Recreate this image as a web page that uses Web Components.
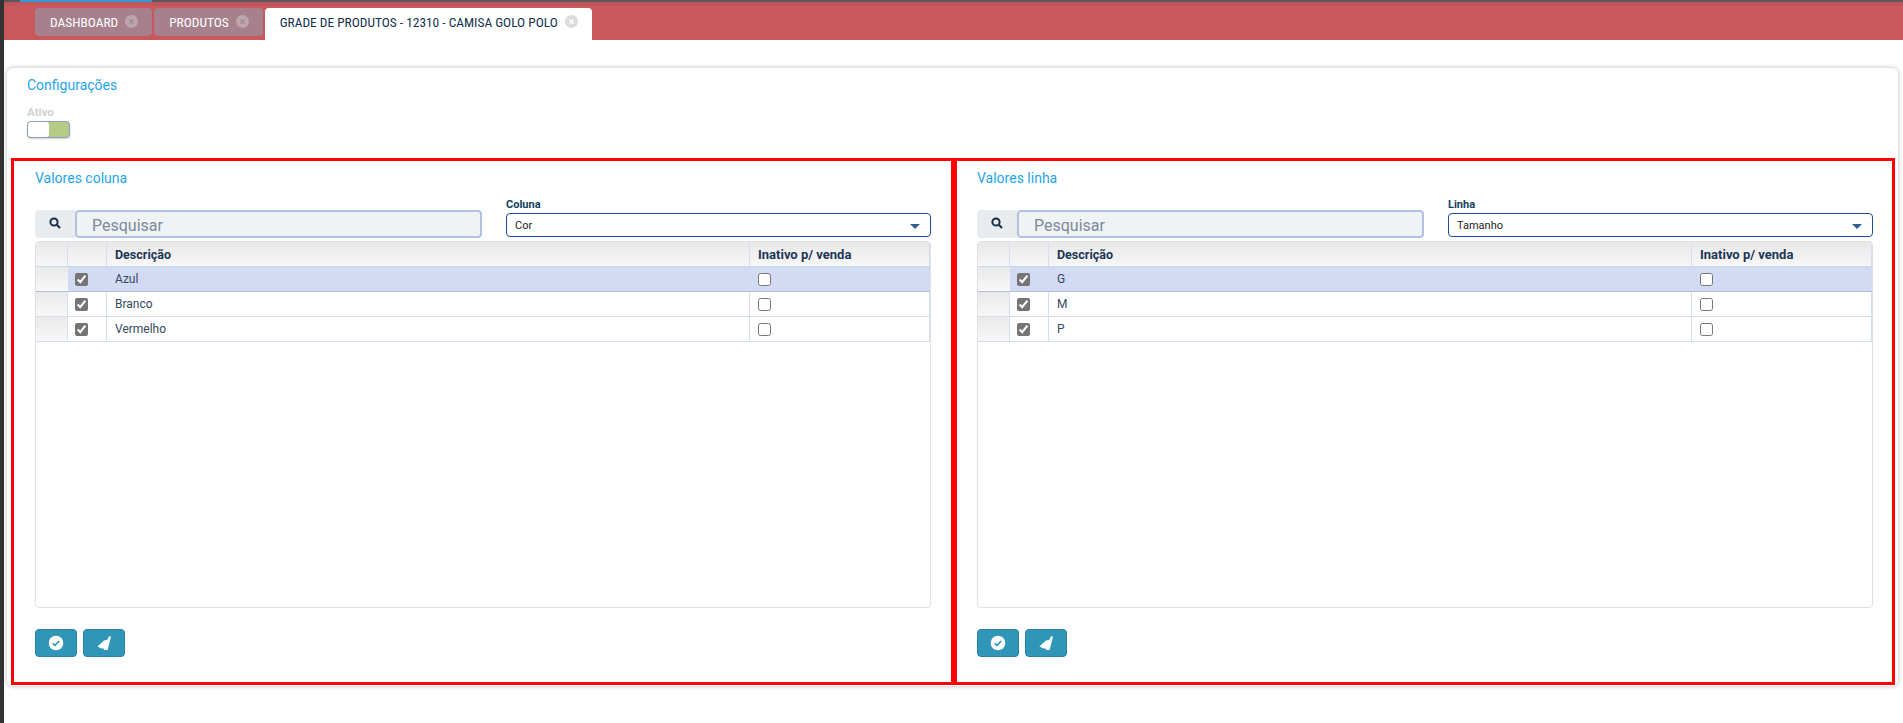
<!DOCTYPE html>
<html lang="pt">
<head>
<meta charset="utf-8">
<title>Grade de produtos</title>
<style>
  html, body { margin: 0; padding: 0; background: #fff; height: 100%; }
  body { font-family: Roboto, 'Liberation Sans', sans-serif; overflow: hidden; }
</style>
</head>
<body>

<app-shell>
  <tab-bar>
    <tab-item>DASHBOARD</tab-item>
    <tab-item>PRODUTOS</tab-item>
    <tab-item active>GRADE DE PRODUTOS - 12310 - CAMISA GOLO POLO</tab-item>
  </tab-bar>
  <page-card>
    <config-section slot="top"></config-section>
    <value-panel heading="Valores coluna" label="Coluna" value="Cor" rows="Azul,Branco,Vermelho"></value-panel>
    <value-panel heading="Valores linha" label="Linha" value="Tamanho" rows="G,M,P"></value-panel>
  </page-card>
</app-shell>

<script>
const condensed = `'Liberation Sans Narrow', 'Roboto Condensed', Roboto, sans-serif`

class AppShell extends HTMLElement {
  connectedCallback() {
    this.attachShadow({ mode: 'open' }).innerHTML = `
      <style>
        :host {
          display: block;
          height: 723px;
          box-sizing: border-box;
          border-left: 4px solid #333;
          background: #fff;
        }
      </style>
      <slot></slot>
    `
  }
}

class TabBar extends HTMLElement {
  connectedCallback() {
    this.attachShadow({ mode: 'open' }).innerHTML = `
      <style>
        :host { display: block; }
        .top {
          height: 2px;
          background: #5a5a5a;
          padding-left: 16px;
        }
        .top div {
          width: 132px;
          height: 2px;
          background: #3a97d4;
        }
        .bar {
          height: 38px;
          box-sizing: border-box;
          padding: 6px 0 0 31px;
          background: linear-gradient(#b9545a 0, #c9575b 4px);
          display: flex;
          align-items: flex-start;
          gap: 2px;
        }
      </style>
      <div class="top"><div></div></div>
      <div class="bar"><slot></slot></div>
    `
  }
}

class TabItem extends HTMLElement {
  connectedCallback() {
    const active = this.hasAttribute('active')
    this.attachShadow({ mode: 'open' }).innerHTML = `
      <style>
        :host {
          display: flex;
          align-items: center;
          height: 28px;
          padding: 0 14px 0 15px;
          gap: 7px;
          box-sizing: border-box;
          border-radius: 4px;
          background: #a6808c;
          color: #fff;
          font: 13.4px ${condensed};
          white-space: nowrap;
        }
        :host([active]) {
          height: 32px;
          padding-bottom: 4px;
          border-radius: 4px 4px 0 0;
          background: #fff;
          color: #12324f;
        }
        svg { width: 13px; height: 13px; flex: none; margin-top: -2px; }
      </style>
      <slot></slot>
      <svg viewBox="0 0 13 13">
        <circle cx="6.5" cy="6.5" r="6.5" fill="${active ? '#dcdcdc' : '#bda6ae'}"/>
        <path d="M4.5 4.5l4 4M8.5 4.5l-4 4" stroke="${active ? '#fff' : '#a08a93'}" stroke-width="1.5"/>
      </svg>
    `
  }
}

class PageCard extends HTMLElement {
  connectedCallback() {
    this.attachShadow({ mode: 'open' }).innerHTML = `
      <style>
        :host {
          display: block;
          margin: 28px 5px 0 3px;
          height: 618px;
          box-sizing: border-box;
          border-radius: 6px;
          background: #fff;
          box-shadow: 0 0 5px rgba(0, 0, 0, .28);
        }
        .panels {
          display: grid;
          grid-template-columns: 943px 941px;
          padding-left: 4px;
        }
      </style>
      <slot name="top"></slot>
      <div class="panels"><slot></slot></div>
    `
  }
}

class ConfigSection extends HTMLElement {
  connectedCallback() {
    this.attachShadow({ mode: 'open' }).innerHTML = `
      <style>
        :host {
          display: block;
          height: 90px;
          box-sizing: border-box;
          padding: 8px 0 0 20px;
        }
        h2 {
          margin: 0;
          font-size: 14px;
          line-height: 18px;
          font-weight: 400;
          color: #1ea5ec;
        }
        label {
          display: block;
          margin-top: 12px;
          font-size: 11.5px;
          line-height: 13px;
          font-weight: 700;
          color: #cfcfcf;
        }
        .toggle {
          display: flex;
          margin-top: 2px;
          width: 43px;
          height: 17px;
          box-sizing: border-box;
          border: 1px solid #8ba0c4;
          border-radius: 4px;
          overflow: hidden;
          background: #b6cb85;
          box-shadow: 0 1px 2px rgba(0, 0, 0, .2);
        }
        .toggle span { width: 21px; background: #fff; border-radius: 3px; }
      </style>
      <h2>Configurações</h2>
      <label>Ativo</label>
      <div class="toggle"><span></span></div>
    `
  }
}

class ValuePanel extends HTMLElement {
  connectedCallback() {
    const a = name => this.getAttribute(name)
    this.attachShadow({ mode: 'open' }).innerHTML = `
      <style>
        :host {
          display: block;
          box-sizing: border-box;
          height: 527px;
          border: 3px solid #f00;
          padding: 7px 20px 0 21px;
        }
        :host(:last-child) { padding: 7px 19px 0 20px; }
        h3 {
          margin: 0;
          font-size: 14px;
          line-height: 20px;
          font-weight: 400;
          color: #1ea5ec;
        }
        .filters {
          display: grid;
          grid-template-columns: 1fr 425px;
          gap: 24px;
          align-items: end;
          margin-top: 10px;
        }
        .search { display: flex; height: 28px; }
        .addon {
          width: 40px;
          display: flex;
          align-items: center;
          justify-content: center;
          background: #e9ecef;
          border-radius: 4px 0 0 4px;
        }
        .addon svg { width: 12px; height: 12px; margin-top: -3px; }
        .input {
          flex: 1;
          box-sizing: border-box;
          border: 2px solid #b1c1e3;
          border-radius: 4px;
          background: #eff3f6;
          padding-left: 15px;
          font-size: 16px;
          line-height: 27px;
          color: #7c8a96;
        }
        .select-wrap { margin-bottom: 1px; }
        .select-wrap label {
          display: block;
          font-size: 11px;
          line-height: 13px;
          font-weight: 700;
          color: #0f3f5f;
          margin-bottom: 2px;
        }
        .select {
          height: 24px;
          box-sizing: border-box;
          border: 1px solid #1c4c9c;
          border-radius: 4px;
          background: #fff;
          display: flex;
          align-items: center;
          justify-content: space-between;
          padding: 0 10px 0 8px;
          font-size: 11px;
          color: #222;
        }
        .caret {
          width: 0;
          height: 0;
          border-left: 5px solid transparent;
          border-right: 5px solid transparent;
          border-top: 5px solid #2f5f8f;
          margin-top: 2px;
        }
        data-grid { margin-top: 3px; }
        .actions { display: flex; gap: 6px; margin-top: 21px; }
      </style>
      <h3>${a('heading')}</h3>
      <div class="filters">
        <div class="search">
          <div class="addon">
            <svg viewBox="0 0 12 12"><circle cx="5" cy="5" r="3.6" fill="none" stroke="#14304a" stroke-width="2"/><path d="M7.8 7.8L11 11" stroke="#14304a" stroke-width="2.2"/></svg>
          </div>
          <div class="input">Pesquisar</div>
        </div>
        <div class="select-wrap">
          <label>${a('label')}</label>
          <div class="select"><span>${a('value')}</span><span class="caret"></span></div>
        </div>
      </div>
      <data-grid rows="${a('rows')}"></data-grid>
      <div class="actions">
        <icon-button kind="check"></icon-button>
        <icon-button kind="broom"></icon-button>
      </div>
    `
  }
}

class DataGrid extends HTMLElement {
  connectedCallback() {
    const rows = this.getAttribute('rows').split(',')
    this.attachShadow({ mode: 'open' }).innerHTML = `
      <style>
        :host {
          display: block;
          height: 367px;
          box-sizing: border-box;
          border: 1px solid #e0e0e0;
          border-radius: 4px;
          overflow: hidden;
          font-size: 12px;
          color: #34495e;
        }
        .row {
          display: grid;
          grid-template-columns: 32px 39px 1fr 180px;
          height: 25px;
          box-sizing: border-box;
          border-bottom: 1px solid #d5deec;
        }
        .row > div {
          display: flex;
          align-items: center;
          box-sizing: border-box;
          padding-left: 8px;
          border-right: 1px solid #d5dff3;
        }
        .row > div:nth-child(2) { padding-left: 7px; }
        .head { font-size: 13px; font-weight: 700; color: #1d3557; background: linear-gradient(#e8e8e8, #f7f7f7); border-bottom-color: #c9d5e8; }
        .head > div:nth-child(3) { font-size: 12.5px; }
        .stub { background: linear-gradient(#e9e9e9, #f8f8f8); }
        .selected { background: #d3daf3; border-bottom-color: #b4c1dd; }
        .selected > div { border-right-color: transparent; }
        input {
          margin: 0;
          width: 13px;
          height: 13px;
          accent-color: #757575;
        }
      </style>
      <div class="row head">
        <div></div><div></div><div>Descrição</div><div>Inativo p/ venda</div>
      </div>
      ${rows.map((r, i) => `
        <div class="row ${i === 0 ? 'selected' : ''}">
          <div class="stub"></div>
          <div><input type="checkbox" checked></div>
          <div>${r}</div>
          <div><input type="checkbox"></div>
        </div>
      `).join('')}
    `
  }
}

class IconButton extends HTMLElement {
  connectedCallback() {
    const icons = {
      check: `<circle cx="8" cy="8" r="7.3" fill="#fff"/><path d="M4.8 8.3l2.2 2.1 4.2-4.4" fill="none" stroke="#2f96b8" stroke-width="1.7"/>`,
      broom: `<path d="M13.4 1L15 1.8 13.4 8 11.6 15 8.4 15 7.6 13.6 5.6 13.4 1.4 11.4 8 5.4 11 5z" fill="#fff"/>`
    }
    this.attachShadow({ mode: 'open' }).innerHTML = `
      <style>
        :host {
          display: flex;
          align-items: center;
          justify-content: center;
          width: 42px;
          height: 28px;
          box-sizing: border-box;
          border: 1px solid #2a7fb0;
          border-radius: 4px;
          background: #2f96b8;
        }
        svg { width: 16px; height: 16px; }
      </style>
      <svg viewBox="0 0 16 16">${icons[this.getAttribute('kind')]}</svg>
    `
  }
}

customElements.define('app-shell', AppShell)
customElements.define('tab-bar', TabBar)
customElements.define('tab-item', TabItem)
customElements.define('page-card', PageCard)
customElements.define('config-section', ConfigSection)
customElements.define('value-panel', ValuePanel)
customElements.define('data-grid', DataGrid)
customElements.define('icon-button', IconButton)
</script>
</body>
</html>
